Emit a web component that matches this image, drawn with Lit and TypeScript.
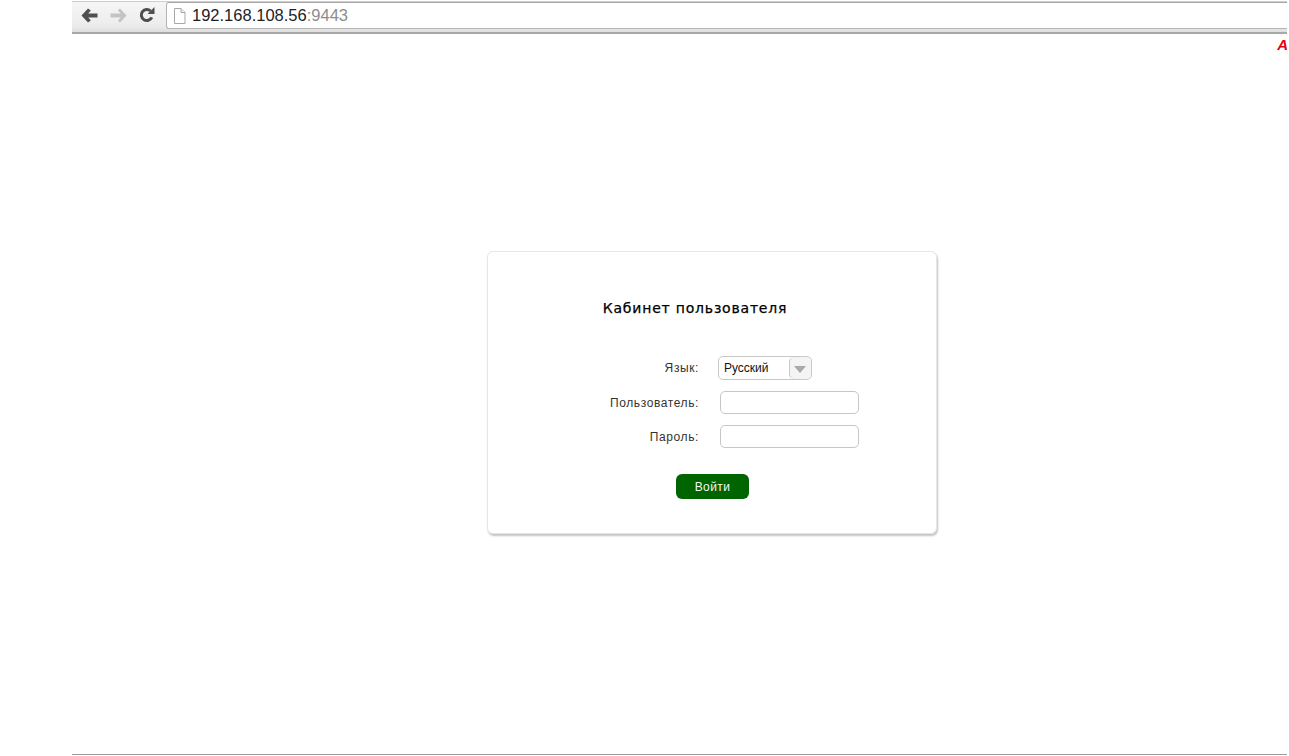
import { LitElement, html, css } from "lit";
import { customElement } from "lit/decorators.js";

@customElement("app-root")
export class AppRoot extends LitElement {
  static styles = css`
    :host { display: block; height: 756px; overflow: hidden; background: #fff; font-family: "Liberation Sans", Arial, sans-serif; }
    .page { height: 756px; box-sizing: border-box; margin: 0 2px 0 72px; display: flex; flex-direction: column; }
    .toolbar { height: 33px; margin-top: 1px; flex: none; box-sizing: border-box; border-top: 1px solid #cfcfcf; border-bottom: 2px solid #a8a8a8;
      background: linear-gradient(#f6f6f6, #ececec 80%, #dedede); display: flex; align-items: flex-start; padding: 1px 0 0 3px; }
    .nav { width: 28px; height: 24px; margin-right: 1px; display: flex; align-items: center; justify-content: center; flex: none; }
    .nav svg { display: block; }
    .address { margin: -1px 0 0 4px; flex: 1; height: 27px; box-sizing: border-box; border: 1px solid #b4b4b4; border-top-color: #a6a6a6; border-right: none; border-radius: 3px 0 0 3px; background: #fff;
      display: flex; align-items: center; padding-left: 6px; gap: 6px; font-size: 16.5px; color: #222; }
    .port { color: #8d8d8d; }
    .flag-row { height: 17px; flex: none; display: flex; justify-content: flex-end; overflow: hidden; }
    .flag { font: italic bold 15px/15px "Liberation Sans", Arial, sans-serif; color: #e8000f; margin: 3px -1px 0 0; }
    .content { flex: 1; padding: 200px 0 0 415px; }
    .card { width: 450px; height: 283px; box-sizing: border-box; border: 1px solid #e6e6e6; border-radius: 6px; background: #fff;
      box-shadow: 1px 2px 2px #c4c4c4; display: flex; flex-direction: column; align-items: center; padding: 47px 0 0; }
    h1 { margin: 0 34px 0 0; font: 400 14px/18px "DejaVu Sans", Verdana, sans-serif; letter-spacing: 0.8px; color: #000; -webkit-text-stroke: 0.25px #000; }
    .form { align-self: flex-start; margin: 39px 0 0 1px; display: grid; grid-template-columns: 210px auto; row-gap: 11px; column-gap: 20px; align-items: center; }
    label { text-align: right; font-size: 12px; letter-spacing: 0.6px; color: #333; }
    .select { width: 94px; height: 24px; box-sizing: border-box; border: 1px solid #c8c8c8; border-radius: 5px; margin-left: -1px; display: flex; align-items: center; justify-content: space-between; padding-left: 5px; font-size: 12px; color: #111; }
    .arrow { width: 22px; height: 22px; box-sizing: border-box; border-left: 1px solid #c8c8c8; border-radius: 5px; display: flex; align-items: center; justify-content: center; background: #f4f4f4; }
    .arrow i { display: block; width: 0; height: 0; margin: 2px 1px 0 0; border: 6px solid transparent; border-bottom: none; border-top: 7px solid #a9a9a9; }
    input { display: block; width: 139px; height: 23px; box-sizing: border-box; margin: 0 0 0 1px; border: 1px solid #c6c6c6; border-radius: 5px; background: #fff; padding: 0 4px; }
    button { margin-top: 26px; width: 73px; height: 25px; border: none; border-radius: 6px; background: #006400; color: #f2f7f2; font: 12px "Liberation Sans", Arial, sans-serif; letter-spacing: 0.4px; padding: 0 0 0 1px; }
    .bottom { height: 1px; background: #9a9a9a; margin-bottom: 1px; flex: none; }
  `;

  render() {
    return html`
      <div class="page">
        <div class="toolbar">
          <div class="nav">
            <svg width="17" height="15" viewBox="0 0 17 15"><path d="M7 .5.5 7.500 7 14.500l2.800-2-2.500-3h9.200v-4H7.300l2.500-3z" fill="#4f4f4f"/></svg>
          </div>
          <div class="nav">
            <svg width="17" height="15" viewBox="0 0 17 15"><path d="M10 .5l6.500 7L10 14.500l-2.200-1.700 3-3.300H.5v-4h10.300l-3-3.300z" fill="#c4c4c4"/></svg>
          </div>
          <div class="nav">
            <svg width="16" height="16" viewBox="0 0 16 16"><path d="M12.800 10.300A5.500 5.500 0 1 1 11.600 4" fill="none" stroke="#4f4f4f" stroke-width="3"/><path d="M8.500 7H15.500V0z" fill="#4f4f4f"/></svg>
          </div>
          <div class="address">
            <svg width="13" height="16" viewBox="0 0 13 16"><path d="M1.500.5h6.500l4 4v11h-10.500z" fill="#fff" stroke="#a8a8a8"/><path d="M8 .5v4h4" fill="#eee" stroke="#a8a8a8"/></svg>
            <span>192.168.108.56<span class="port">:9443</span></span>
          </div>
        </div>
        <div class="flag-row"><span class="flag">A</span></div>
        <div class="content">
          <div class="card">
            <h1>Кабинет пользователя</h1>
            <div class="form">
              <label>Язык:</label>
              <div class="select"><span>Русский</span><span class="arrow"><i></i></span></div>
              <label>Пользователь:</label>
              <input type="text" />
              <label>Пароль:</label>
              <input type="password" />
            </div>
            <button>Войти</button>
          </div>
        </div>
        <div class="bottom"></div>
      </div>
    `;
  }
}
